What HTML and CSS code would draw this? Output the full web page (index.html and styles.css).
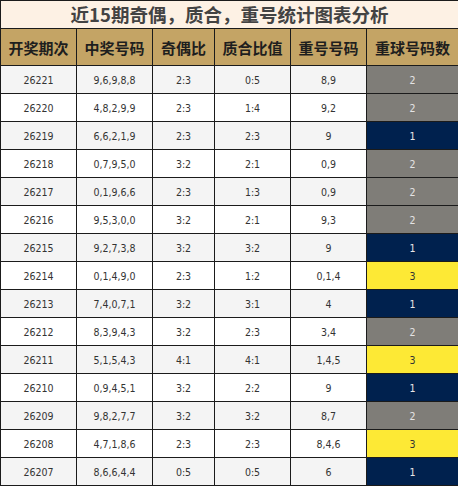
FILE: index.html
```html
<!DOCTYPE html>
<html lang="zh-CN">
<head>
  <meta charset="UTF-8">
  <title>近15期奇偶，质合，重号统计图表分析</title>
  <link rel="stylesheet" href="styles.css">
</head>
<body>

  <table class="stats">
    <colgroup>
      <col class="c-issue">
      <col class="c-nums">
      <col class="c-odd">
      <col class="c-prime">
      <col class="c-rep">
      <col class="c-count">
    </colgroup>
    <thead>
      <tr><th class="title" colspan="6">近15期奇偶，质合，重号统计图表分析</th></tr>
      <tr class="head">
        <th>开奖期次</th><th>中奖号码</th><th>奇偶比</th><th>质合比值</th><th>重号号码</th><th>重球号码数</th>
      </tr>
    </thead>
    <tbody id="rows"></tbody>
  </table>

  <script>
    const data = [
      ['26221', '9,6,9,8,8', '2:3', '0:5', '8,9', 2],
      ['26220', '4,8,2,9,9', '2:3', '1:4', '9,2', 2],
      ['26219', '6,6,2,1,9', '2:3', '2:3', '9', 1],
      ['26218', '0,7,9,5,0', '3:2', '2:1', '0,9', 2],
      ['26217', '0,1,9,6,6', '2:3', '1:3', '0,9', 2],
      ['26216', '9,5,3,0,0', '3:2', '2:1', '9,3', 2],
      ['26215', '9,2,7,3,8', '3:2', '3:2', '9', 1],
      ['26214', '0,1,4,9,0', '2:3', '1:2', '0,1,4', 3],
      ['26213', '7,4,0,7,1', '3:2', '3:1', '4', 1],
      ['26212', '8,3,9,4,3', '3:2', '2:3', '3,4', 2],
      ['26211', '5,1,5,4,3', '4:1', '4:1', '1,4,5', 3],
      ['26210', '0,9,4,5,1', '3:2', '2:2', '9', 1],
      ['26209', '9,8,2,7,7', '3:2', '3:2', '8,7', 2],
      ['26208', '4,7,1,8,6', '2:3', '2:3', '8,4,6', 3],
      ['26207', '8,6,6,4,4', '0:5', '0:5', '6', 1]
    ];

    const tbody = document.getElementById('rows');
    data.forEach((r, idx) => {
      const tr = document.createElement('tr');
      if (idx % 2 === 0) tr.className = 'alt';
      for (let i = 0; i < 5; i++) {
        const td = document.createElement('td');
        td.textContent = r[i];
        tr.appendChild(td);
      }
      const cnt = document.createElement('td');
      cnt.className = 'n' + r[5];
      cnt.textContent = r[5];
      tr.appendChild(cnt);
      tbody.appendChild(tr);
    });
  </script>

</body>
</html>
```

FILE: styles.css
```css
body {
  margin: 0;
  background: #fff;
}

.stats {
  width: 458px;
  table-layout: fixed;
  border-collapse: collapse;
  font-family: "Noto Sans CJK SC", sans-serif;
}

.c-issue, .c-nums, .c-prime, .c-rep { width: 76px; }
.c-odd { width: 62px; }
.c-count { width: 92px; }

.stats th,
.stats td {
  border: 1px solid #1b1b1b;
  padding: 0;
  text-align: center;
}

.title {
  height: 27px;
  background: #fdf1e4;
  color: #434343;
  font-size: 18.5px;
  font-weight: bold;
  line-height: 27px;
}

.head th {
  height: 36px;
  background: #c4a465;
  color: #1e1e1e;
  font-size: 15px;
  font-weight: bold;
}

.stats td {
  height: 27px;
  font-family: "DejaVu Sans Condensed", "DejaVu Sans", sans-serif;
  font-size: 10.5px;
  color: #333;
  background: #fff;
}

.stats .alt td {
  background: #f4f4f4;
}

.stats td.n1 { background: #00214e; color: #e6e6e6; }
.stats td.n2 { background: #7f7d78; color: #e4e4e4; }
.stats td.n3 { background: #fde935; color: #333; }
```
